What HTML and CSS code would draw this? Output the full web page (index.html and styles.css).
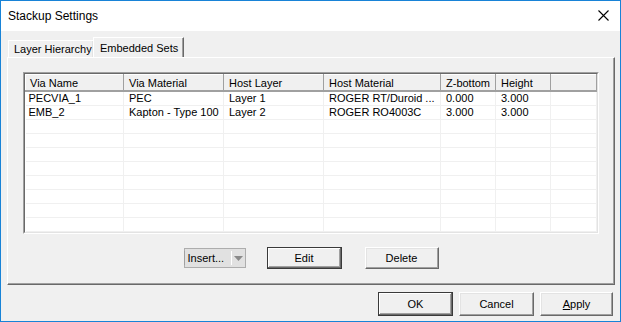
FILE: index.html
```html
<!DOCTYPE html>
<html lang="en">

<head>
    <meta charset="UTF-8">
    <title>Stackup Settings</title>
    <link rel="stylesheet" href="styles.css">
</head>

<body>
    <div class="window">
        <div class="titlebar">
            <span class="title">Stackup Settings</span>
            <svg class="close" width="11" height="11" viewBox="0 0 11 11">
                <path d="M0.5 0.5 L10.5 10.5 M10.5 0.5 L0.5 10.5" stroke="#000" stroke-width="1.1" fill="none"/>
            </svg>
        </div>

        <div class="tabs">
            <div class="tab">Layer Hierarchy</div>
            <div class="tab active">Embedded Sets</div>
        </div>

        <div class="panel">
            <div class="list">
                <div class="list-inner">
                    <table class="grid">
                        <colgroup>
                            <col style="width: 98px">
                            <col style="width: 100px">
                            <col style="width: 100px">
                            <col style="width: 117px">
                            <col style="width: 55px">
                            <col style="width: 55px">
                            <col>
                        </colgroup>
                        <thead>
                            <tr>
                                <th>Via Name</th>
                                <th>Via Material</th>
                                <th>Host Layer</th>
                                <th>Host Material</th>
                                <th>Z-bottom</th>
                                <th>Height</th>
                                <th></th>
                            </tr>
                        </thead>
                        <tbody>
                            <tr>
                                <td>PECVIA_1</td>
                                <td>PEC</td>
                                <td>Layer 1</td>
                                <td>ROGER RT/Duroid ...</td>
                                <td>0.000</td>
                                <td>3.000</td>
                                <td></td>
                            </tr>
                            <tr>
                                <td>EMB_2</td>
                                <td>Kapton - Type 100</td>
                                <td>Layer 2</td>
                                <td>ROGER RO4003C</td>
                                <td>3.000</td>
                                <td>3.000</td>
                                <td></td>
                            </tr>
                            <tr><td></td><td></td><td></td><td></td><td></td><td></td><td></td></tr>
                            <tr><td></td><td></td><td></td><td></td><td></td><td></td><td></td></tr>
                            <tr><td></td><td></td><td></td><td></td><td></td><td></td><td></td></tr>
                            <tr><td></td><td></td><td></td><td></td><td></td><td></td><td></td></tr>
                            <tr><td></td><td></td><td></td><td></td><td></td><td></td><td></td></tr>
                            <tr><td></td><td></td><td></td><td></td><td></td><td></td><td></td></tr>
                            <tr><td></td><td></td><td></td><td></td><td></td><td></td><td></td></tr>
                            <tr><td></td><td></td><td></td><td></td><td></td><td></td><td></td></tr>
                            <tr><td></td><td></td><td></td><td></td><td></td><td></td><td></td></tr>
                            <tr><td></td><td></td><td></td><td></td><td></td><td></td><td></td></tr>
                        </tbody>
                    </table>
                </div>
            </div>

            <div class="panel-buttons">
                <div class="split-btn">
                    <span class="split-label">Insert...</span>
                    <span class="split-arrow">
                        <svg width="9" height="5" viewBox="0 0 9 5"><path d="M0 0 H9 L4.5 5 Z" fill="#8a8a8a"/></svg>
                    </span>
                </div>
                <button class="btn default edit">Edit</button>
                <button class="btn delete">Delete</button>
            </div>
        </div>

        <div class="footer">
            <button class="btn default">OK</button>
            <button class="btn">Cancel</button>
            <button class="btn"><u>A</u>pply</button>
        </div>
    </div>
</body>

</html>
```

FILE: styles.css
```css
body {
    margin: 0;
    font-family: "Liberation Sans", Arial, sans-serif;
    font-size: 11px;
    color: #000;
    background-color: #f0f0f0;
}

.window {
    width: 621px;
    height: 322px;
    box-sizing: border-box;
    border: 1px solid #1883d7;
    background-color: #f0f0f0;
    display: flex;
    flex-direction: column;
    overflow: hidden;
}

.titlebar {
    height: 30px;
    background-color: #fff;
    display: flex;
    align-items: center;
    justify-content: space-between;
    padding: 0 11px 0 7px;
    flex-shrink: 0;
}

.title {
    font-size: 12px;
    margin-top: -1px;
}

.close {
    display: block;
    margin-top: -1px;
}

/* tab strip */
.tabs {
    display: flex;
    align-items: flex-end;
    height: 20px;
    margin-top: 6px;
    padding-left: 7px;
    flex-shrink: 0;
}

.tab {
    height: 17px;
    box-sizing: border-box;
    width: 86px;
    padding: 2px 0 0 5px;
    border-top: 1px solid #fff;
    border-left: 1px solid #fff;
    border-right: 1px solid #a0a0a0;
    box-shadow: inset -1px 0 #e3e3e3;
    white-space: nowrap;
}

.tab.active {
    width: 91px;
    height: 21px;
    margin-bottom: -1px;
    margin-left: -1px;
    padding-top: 4px;
    padding-left: 6px;
    background-color: #f0f0f0;
    border-right: 1px solid #696969;
    box-shadow: inset -1px 0 #a0a0a0;
}

.panel {
    height: 228px;
    margin: 0 5px 0 6px;
    box-sizing: border-box;
    border-top: 1px solid #fff;
    border-left: 1px solid #fff;
    border-right: 1px solid #696969;
    border-bottom: 1px solid #696969;
    box-shadow: inset -1px -1px #a0a0a0;
    padding: 14px 0 0 15px;
    flex-shrink: 0;
}

/* list view */
.list {
    width: 576px;
    height: 162px;
    box-sizing: border-box;
    border: 1px solid;
    border-color: #a0a0a0 #fff #fff #a0a0a0;
}

.list-inner {
    height: 100%;
    box-sizing: border-box;
    border: 1px solid;
    border-color: #696969 #e3e3e3 #e3e3e3 #696969;
    background-color: #fff;
    overflow: hidden;
}

.grid {
    width: 572px;
    table-layout: fixed;
    border-collapse: collapse;
}

.grid th {
    height: 15px;
    padding: 0 0 0 5px;
    text-align: left;
    font-weight: normal;
    background-color: #f0f0f0;
    border-top: 1px solid #fff;
    border-left: 1px solid #fff;
    border-right: 1px solid #a0a0a0;
    border-bottom: 2px solid #a0a0a0;
    white-space: nowrap;
    overflow: hidden;
    vertical-align: middle;
}

.grid th:first-child {
    padding-left: 4px;
}

.grid td {
    height: 13px;
    padding: 0 0 0 5px;
    border-right: 1px solid #f0f0f0;
    border-bottom: 1px solid #f0f0f0;
    white-space: nowrap;
    overflow: hidden;
    line-height: 13px;
}

.grid td:first-child {
    padding-left: 3px;
}

/* buttons under the list */
.panel-buttons {
    display: flex;
    align-items: center;
    justify-content: center;
    margin: 13px 0 0 -15px;
    height: 22px;
}

.split-btn {
    display: flex;
    align-items: stretch;
    width: 62px;
    height: 20px;
    box-sizing: border-box;
    border: 1px solid #adadad;
    background-color: #e1e1e1;
}

.split-label {
    padding: 3px 0 0 3px;
    width: 43px;
    border-right: 1px solid #fff;
    box-shadow: -1px 0 #a0a0a0;
    margin-top: 2px;
    margin-bottom: 2px;
    padding-top: 1px;
}

.split-arrow {
    flex-grow: 1;
    display: flex;
    align-items: center;
    justify-content: center;
}

.btn {
    font-family: "Liberation Sans", Arial, sans-serif;
    font-size: 11px;
    color: #000;
    width: 75px;
    height: 23px;
    padding: 0;
    background-color: #f0f0f0;
    border: 1px solid;
    border-color: #fff #696969 #696969 #fff;
    box-shadow: inset -1px -1px #a0a0a0, inset 1px 1px #e3e3e3;
    cursor: pointer;
}

.btn.default {
    border: 1px solid #3a3a3a;
    box-shadow: inset -1px -1px #6a6a6a, inset 1px 1px #fff, inset -2px -2px #a0a0a0;
}

.edit {
    margin-left: 21px;
    height: 22px;
}

.delete {
    margin-left: 23px;
    width: 74px;
    height: 22px;
}

.footer {
    display: flex;
    justify-content: flex-end;
    gap: 6px;
    margin-top: 7px;
    padding-right: 7px;
}

.footer .btn {
    height: 24px;
}

.footer .btn:last-child {
    width: 73px;
}
```
